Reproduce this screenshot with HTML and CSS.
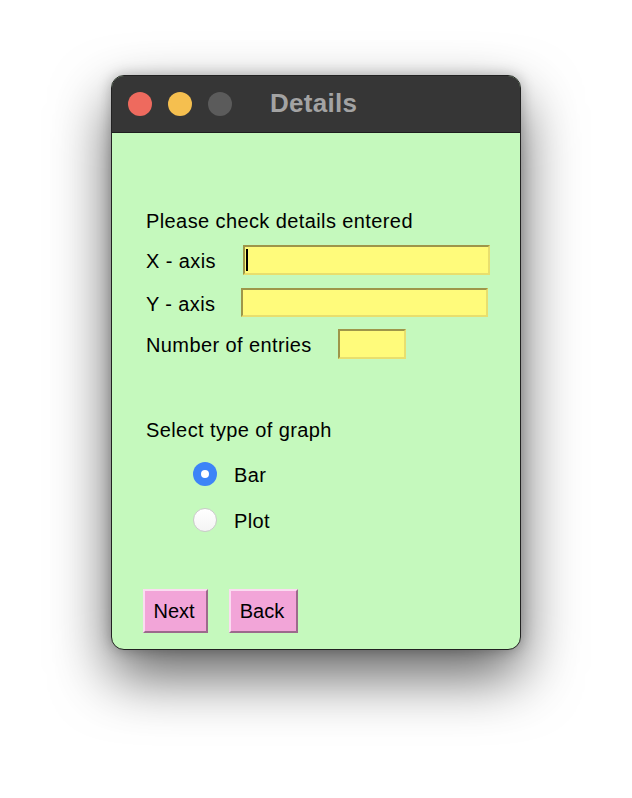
FILE: index.html
```html
<!DOCTYPE html>
<html>
<head>
<meta charset="utf-8">
<link rel="stylesheet" href="styles.css">
</head>
<body>
<div class="window">
  <div class="titlebar">
    <div class="lights">
      <span class="light red"></span>
      <span class="light yellow"></span>
      <span class="light gray"></span>
    </div>
    <div class="title">Details</div>
  </div>
  <div class="content">
    <div class="heading">Please check details entered</div>
    <div class="row row-x">
      <span class="label">X - axis</span>
      <span class="field field-x"><span class="caret"></span></span>
    </div>
    <div class="row row-y">
      <span class="label">Y - axis</span>
      <span class="field field-y"></span>
    </div>
    <div class="row row-n">
      <span class="label">Number of entries</span>
      <span class="field field-n"></span>
    </div>
    <div class="heading select">Select type of graph</div>
    <div class="radio-row first">
      <span class="radio on"></span>
      <span class="rlabel">Bar</span>
    </div>
    <div class="radio-row second">
      <span class="radio off"></span>
      <span class="rlabel">Plot</span>
    </div>
    <div class="buttons">
      <span class="btn btn-next">Next</span>
      <span class="btn btn-back">Back</span>
    </div>
  </div>
</div>
</body>
</html>
```

FILE: styles.css
```css
html, body {
  margin: 0;
  padding: 0;
  background: #ffffff;
}
body {
  width: 632px;
  height: 798px;
  overflow: hidden;
  font-family: "Liberation Sans", Arial, sans-serif;
  color: #000;
}
.window {
  margin: 75px 0 0 111px;
  width: 410px;
  height: 575px;
  box-sizing: border-box;
  border: 1px solid #222;
  border-radius: 13px;
  overflow: hidden;
  display: flex;
  flex-direction: column;
  box-shadow: 0 26px 58px rgba(0,0,0,0.62), 0 0 14px rgba(0,0,0,0.25);
  background: #c5f9bd;
}
.titlebar {
  height: 57px;
  background: #363636;
  display: flex;
  align-items: center;
  box-sizing: border-box;
  border-bottom: 1px solid #1e1e1e;
  flex: none;
}
.lights {
  display: flex;
  gap: 16px;
  margin-left: 16px;
}
.light {
  width: 24px;
  height: 24px;
  border-radius: 50%;
  display: block;
}
.red { background: #ee6a5e; }
.yellow { background: #f5bf4f; }
.gray { background: #5b5b5b; }
.title {
  margin-left: 38px;
  margin-bottom: 2px;
  font-size: 26px;
  font-weight: bold;
  color: #a3a3a3;
  font-family: "Liberation Sans", Arial, sans-serif;
  letter-spacing: 0.3px;
}
.content {
  flex: 1;
  display: flex;
  flex-direction: column;
  padding: 77px 0 0 34px;
  font-size: 20px;
  line-height: 23px;
  letter-spacing: 0.4px;
}
.heading {
  height: 23px;
}
.row {
  display: flex;
  align-items: center;
  height: 30px;
}
.row-x { margin-top: 12px; }
.row-y { margin-top: 13px; height: 29px; }
.row-n { margin-top: 12px; }
.label { display: block; padding-top: 3px; }
.field {
  display: block;
  position: relative;
  box-sizing: border-box;
  height: 100%;
  background: #fffb7b;
  border-top: 2px solid #9e9649;
  border-left: 2px solid #9e9649;
  border-bottom: 2px solid #e8df6e;
  border-right: 2px solid #e8df6e;
}
.field-x { width: 247px; margin-left: 27px; }
.field-y { width: 247px; margin-left: 25px; }
.field-n { width: 68px; margin-left: 26px; }
.caret {
  position: absolute;
  left: 1px;
  top: 2px;
  width: 2px;
  height: 22px;
  background: #000;
}
.select { margin-top: 60px; }
.radio-row {
  display: flex;
  align-items: center;
  height: 24px;
  padding-left: 47px;
}
.radio-row.first { margin-top: 20px; }
.radio-row.second { margin-top: 22px; }
.radio {
  display: block;
  box-sizing: border-box;
  width: 24px;
  height: 24px;
  border-radius: 50%;
  position: relative;
}
.radio.on {
  background: #3d84f7;
}
.radio.on::after {
  content: "";
  position: absolute;
  left: 8px;
  top: 8px;
  width: 8px;
  height: 8px;
  border-radius: 50%;
  background: #fff;
}
.radio.off {
  background: linear-gradient(#ffffff, #f4f4f4);
  border: 1px solid #c9c9c9;
}
.rlabel {
  margin-left: 17px;
  padding-top: 2px;
}
.buttons {
  display: flex;
  gap: 21px;
  margin-top: 57px;
  margin-left: -3px;
}
.btn {
  display: flex;
  align-items: center;
  justify-content: center;
  box-sizing: border-box;
  height: 44px;
  padding-right: 3px;
  background: #f2a5d8;
  border-top: 2px solid #fbdcf1;
  border-left: 2px solid #fbdcf1;
  border-bottom: 2px solid #9c6a8c;
  border-right: 2px solid #9c6a8c;
  font-size: 20px;
  letter-spacing: 0;
}
.btn-next { width: 65px; }
.btn-back { width: 69px; }
```
